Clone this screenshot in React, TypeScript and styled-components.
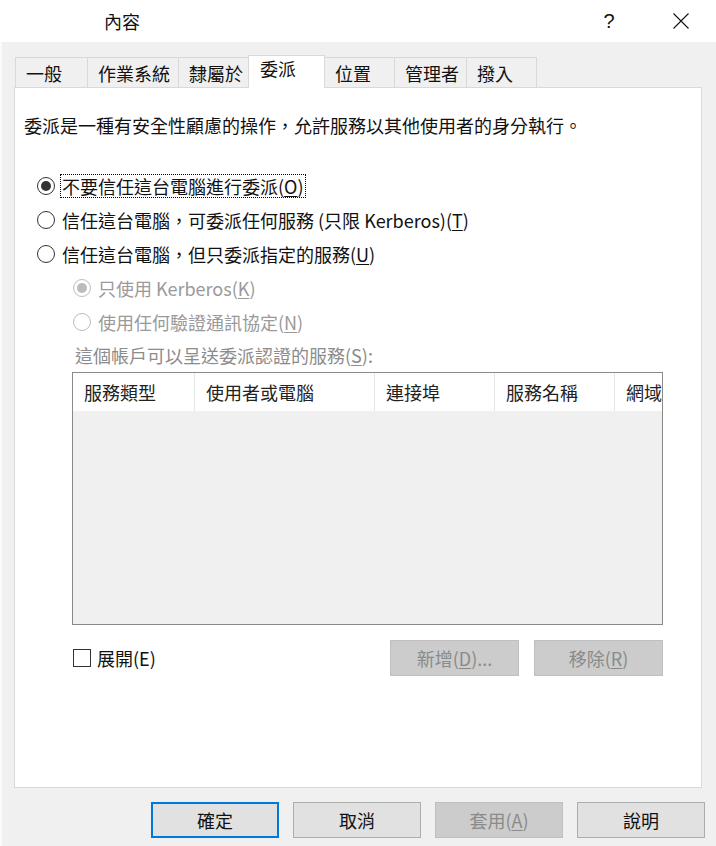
import React from "react";
import styled, { createGlobalStyle } from "styled-components";

const Global = createGlobalStyle`
  html, body { margin: 0; padding: 0; background: #f0f0f0; }
  * { box-sizing: border-box; }
`;

const Window = styled.div`
  width: 716px;
  height: 846px;
  display: flex;
  flex-direction: column;
  background: #f0f0f0;
  overflow: hidden;
  font-family: "Noto Sans CJK TC", "Liberation Sans", sans-serif;
  font-size: 18px;
  line-height: 24px;
  color: #1a1a1a;
`;

const TitleBar = styled.div`
  flex: none;
  height: 42px;
  background: #ffffff;
  display: flex;
  align-items: center;
  padding-left: 104px;
`;

const Title = styled.div`
  flex: 1;
  font-size: 18px;
  color: #111;
`;

const TitleButton = styled.div<{ $w: number }>`
  width: ${(p) => p.$w}px;
  height: 42px;
  display: flex;
  align-items: center;
  justify-content: center;
  font-family: "Liberation Sans", sans-serif;
  font-size: 20px;
  color: #111;
`;

const Body = styled.div`
  flex: 1;
  display: flex;
  flex-direction: column;
  padding: 13px 14px 8px 12px;
  border-left: 2px solid #fafafa;
`;

const TabRow = styled.div`
  flex: none;
  height: 32px;
  display: flex;
  align-items: flex-end;
  padding-left: 1px;
`;

const Tab = styled.div<{ $w: number; $active?: boolean }>`
  position: relative;
  width: ${(p) => p.$w}px;
  height: ${(p) => (p.$active ? 33 : 30)}px;
  margin-right: -1px;
  margin-bottom: ${(p) => (p.$active ? -1 : 0)}px;
  z-index: ${(p) => (p.$active ? 2 : 1)};
  border: 1px solid #d9d9d9;
  border-bottom: none;
  background: ${(p) => (p.$active ? "#ffffff" : "#f0f0f0")};
  padding: ${(p) => (p.$active ? "0 0 0 11px" : "3px 0 0 10px")};
  white-space: nowrap;
  color: #111;
`;

const Panel = styled.div`
  flex: none;
  height: 701px;
  background: #ffffff;
  border: 1px solid #d9d9d9;
  display: flex;
  flex-direction: column;
`;

const Description = styled.div`
  margin: 25px 0 0 9px;
  color: #111;
`;

const RadioGroup = styled.div`
  margin-top: 32px;
  display: flex;
  flex-direction: column;
`;

const RadioRow = styled.div<{ $indent: number; $disabled?: boolean }>`
  height: 34px;
  display: flex;
  align-items: center;
  padding-left: ${(p) => p.$indent}px;
  color: ${(p) => (p.$disabled ? "#9a9a9a" : "#111")};
  white-space: nowrap;
`;

const RadioCircle = styled.span<{ $checked?: boolean; $disabled?: boolean }>`
  flex: none;
  width: 18px;
  height: 18px;
  border-radius: 50%;
  border: 1px solid ${(p) => (p.$disabled ? "#bcbcbc" : "#333333")};
  background: #fff;
  display: flex;
  align-items: center;
  justify-content: center;
  margin-right: 5px;
  &::after {
    content: "";
    width: 10px;
    height: 10px;
    border-radius: 50%;
    background: ${(p) => (p.$disabled ? "#bcbcbc" : "#333333")};
    display: ${(p) => (p.$checked ? "block" : "none")};
  }
`;

const RadioLabel = styled.span<{ $focused?: boolean }>`
  padding: 0 1px;
  border: 1px dotted ${(p) => (p.$focused ? "#000" : "transparent")};
  line-height: 22px;
`;

const Mn = styled.u`
  text-decoration: underline;
  text-underline-offset: 2px;
`;

const ListCaption = styled.div`
  margin: 4px 0 0 60px;
  color: #8c8c8c;
`;

const ListBox = styled.div`
  margin: 5px 0 0 57px;
  width: 591px;
  height: 253px;
  border: 1px solid #8a8a8a;
  background: #f0f0f0;
  display: flex;
  flex-direction: column;
  overflow: hidden;
`;

const ListHeader = styled.div`
  flex: none;
  height: 38px;
  background: #ffffff;
  display: flex;
`;

const HeaderCell = styled.div<{ $w: number }>`
  flex: none;
  width: ${(p) => p.$w}px;
  height: 100%;
  display: flex;
  align-items: center;
  padding-left: 11px;
  border-right: 1px solid #e5e5e5;
  color: #222;
  white-space: nowrap;
`;

const BottomRow = styled.div`
  margin: 15px 0 0 57px;
  width: 591px;
  display: flex;
  align-items: center;
`;

const CheckBox = styled.span`
  flex: none;
  width: 18px;
  height: 18px;
  margin-left: 1px;
  border: 1px solid #333;
  background: #fff;
  margin-right: 6px;
`;

const CheckLabel = styled.span`
  flex: 1;
  color: #111;
`;

const ButtonGroup = styled.div`
  display: flex;
  gap: 15px;
`;

const Button = styled.div<{ $disabled?: boolean; $default?: boolean; $w?: number }>`
  width: ${(p) => p.$w ?? 129}px;
  height: 36px;
  display: flex;
  align-items: center;
  justify-content: center;
  background: ${(p) => (p.$disabled ? "#cccccc" : "#e1e1e1")};
  border: ${(p) =>
    p.$default ? "2px solid #0078d7" : p.$disabled ? "1px solid #bfbfbf" : "1px solid #adadad"};
  color: ${(p) => (p.$disabled ? "#8a8a8a" : "#111")};
  white-space: nowrap;
`;

const Footer = styled.div`
  flex: none;
  margin-top: 14px;
  margin-right: -3px;
  display: flex;
  justify-content: flex-end;
  gap: 14px;
`;

const tabs = [
  { label: "一般", w: 73 },
  { label: "作業系統", w: 92 },
  { label: "隸屬於", w: 71 },
  { label: "委派", w: 77, active: true },
  { label: "位置", w: 71 },
  { label: "管理者", w: 73 },
  { label: "撥入", w: 71 },
];

const columns = [
  { label: "服務類型", w: 122 },
  { label: "使用者或電腦", w: 180 },
  { label: "連接埠", w: 120 },
  { label: "服務名稱", w: 120 },
  { label: "網域", w: 120 },
];

export default function App() {
  return (
    <Window>
      <Global />
      <TitleBar>
        <Title>內容</Title>
        <TitleButton $w={74}>?</TitleButton>
        <TitleButton $w={70}>
          <svg width="16" height="16" viewBox="0 0 16 16">
            <path d="M0.5 0.5 L15.5 15.5 M15.5 0.5 L0.5 15.5" stroke="#111" strokeWidth="1.1" fill="none" />
          </svg>
        </TitleButton>
      </TitleBar>
      <Body>
        <TabRow>
          {tabs.map((t) => (
            <Tab key={t.label} $w={t.w} $active={t.active}>
              {t.label}
            </Tab>
          ))}
        </TabRow>
        <Panel>
          <Description>委派是一種有安全性顧慮的操作，允許服務以其他使用者的身分執行。</Description>
          <RadioGroup>
            <RadioRow $indent={22}>
              <RadioCircle $checked />
              <RadioLabel $focused>
                不要信任這台電腦進行委派(<Mn>O</Mn>)
              </RadioLabel>
            </RadioRow>
            <RadioRow $indent={22}>
              <RadioCircle />
              <RadioLabel>
                信任這台電腦，可委派任何服務 (只限 Kerberos)(<Mn>T</Mn>)
              </RadioLabel>
            </RadioRow>
            <RadioRow $indent={22}>
              <RadioCircle />
              <RadioLabel>
                信任這台電腦，但只委派指定的服務(<Mn>U</Mn>)
              </RadioLabel>
            </RadioRow>
            <RadioRow $indent={58} $disabled>
              <RadioCircle $checked $disabled />
              <RadioLabel>
                只使用 Kerberos(<Mn>K</Mn>)
              </RadioLabel>
            </RadioRow>
            <RadioRow $indent={58} $disabled>
              <RadioCircle $disabled />
              <RadioLabel>
                使用任何驗證通訊協定(<Mn>N</Mn>)
              </RadioLabel>
            </RadioRow>
          </RadioGroup>
          <ListCaption>
            這個帳戶可以呈送委派認證的服務(<Mn>S</Mn>):
          </ListCaption>
          <ListBox>
            <ListHeader>
              {columns.map((c) => (
                <HeaderCell key={c.label} $w={c.w}>
                  {c.label}
                </HeaderCell>
              ))}
            </ListHeader>
          </ListBox>
          <BottomRow>
            <CheckBox />
            <CheckLabel>展開(E)</CheckLabel>
            <ButtonGroup>
              <Button $disabled>
                新增(<Mn>D</Mn>)...
              </Button>
              <Button $disabled>
                移除(<Mn>R</Mn>)
              </Button>
            </ButtonGroup>
          </BottomRow>
        </Panel>
        <Footer>
          <Button $default $w={128}>確定</Button>
          <Button $w={128}>取消</Button>
          <Button $disabled $w={128}>
            套用(<Mn>A</Mn>)
          </Button>
          <Button $w={128}>說明</Button>
        </Footer>
      </Body>
    </Window>
  );
}
